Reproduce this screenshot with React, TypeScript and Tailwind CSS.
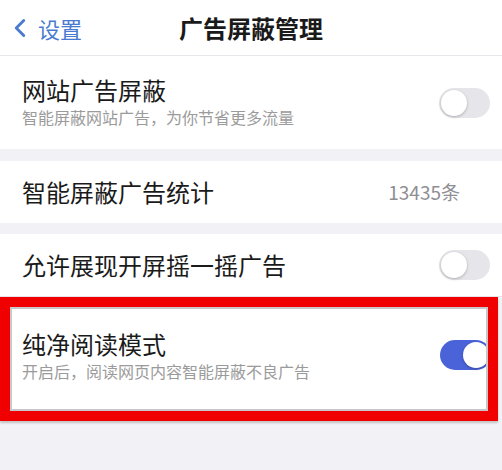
import { ChevronLeft } from 'lucide-react';

const font = { fontFamily: '"Noto Sans CJK SC", "Noto Sans", sans-serif' };

function Toggle({ on }: { on?: boolean }) {
  return (
    <div
      className={`w-[51px] h-[30px] rounded-full p-[2px] flex shrink-0 ${
        on ? 'bg-[#4a63d9] justify-end' : 'bg-[#e6e6ea] justify-start'
      }`}
    >
      <div className="w-[26px] h-[26px] rounded-full bg-white shadow-[0_1px_3px_rgba(0,0,0,0.25)]" />
    </div>
  );
}

export default function App() {
  return (
    <div className="w-[502px] h-[470px] bg-[#f2f2f6] overflow-hidden" style={font}>
      {/* Nav bar */}
      <div className="relative h-[56px] bg-white border-b border-[#e8e8ec] flex items-center">
        <div className="flex items-center pl-[5px] text-[#4a7bd0]">
          <ChevronLeft className="w-[30px] h-[34px]" strokeWidth={2.3} />
          <span className="ml-[3px] text-[22px] leading-none">设置</span>
        </div>
        <h1 className="absolute left-0 right-0 text-center text-[24px] font-bold text-[#1a1a1a] leading-none pointer-events-none">
          广告屏蔽管理
        </h1>
      </div>

      {/* Row 1 */}
      <div className="bg-white h-[93px] flex items-center px-[22px] pr-[12px]">
        <div className="flex-1 -mt-[3px]">
          <p className="text-[24px] leading-[28px] text-[#1a1a1a]">网站广告屏蔽</p>
          <p className="text-[16px] leading-[20px] text-[#9b9b9b] mt-[3px]">智能屏蔽网站广告，为你节省更多流量</p>
        </div>
        <Toggle />
      </div>

      <div className="h-[12px]" />

      {/* Row 2 */}
      <div className="bg-white h-[62px] flex items-center px-[22px] pr-[42px]">
        <p className="flex-1 text-[24px] leading-[30px] text-[#1a1a1a]">智能屏蔽广告统计</p>
        <span className="text-[19px] text-[#8e8e93]">13435条</span>
      </div>

      <div className="h-[11px]" />

      {/* Row 3 */}
      <div className="bg-white h-[63px] flex items-center px-[22px] pr-[12px] border-b border-[#e4e4e8]">
        <p className="flex-1 text-[24px] leading-[30px] text-[#1a1a1a]">允许展现开屏摇一摇广告</p>
        <Toggle />
      </div>

      {/* Highlighted row */}
      <div className="w-[498px] border-[10px] border-[#f00000] shadow-[0_2px_2px_rgba(0,0,0,0.2)]">
        <div className="h-[104px] bg-white border-[2px] border-[#c8c8cc] flex items-center pl-[10px] overflow-hidden">
          <div className="flex-1 -mt-[8px]">
            <p className="text-[24px] leading-[28px] text-[#1a1a1a]">纯净阅读模式</p>
            <p className="text-[16px] leading-[20px] text-[#9b9b9b] mt-[3px]">开启后，阅读网页内容智能屏蔽不良广告</p>
          </div>
          <div className="mr-[-5px] -mt-[8px]">
            <Toggle on />
          </div>
        </div>
      </div>
    </div>
  );
}
